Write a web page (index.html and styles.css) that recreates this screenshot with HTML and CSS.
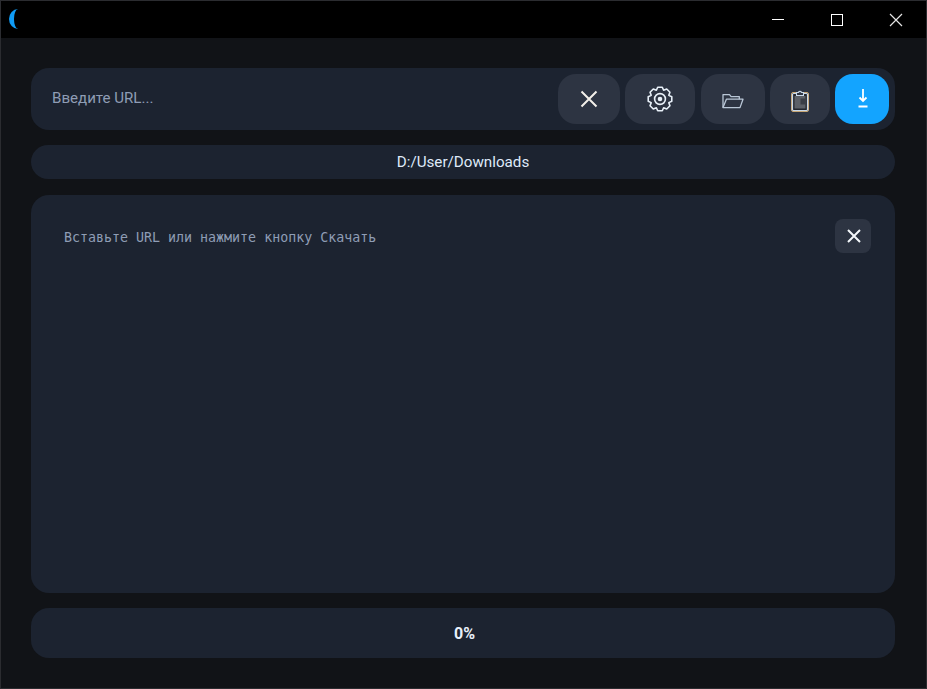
FILE: index.html
```html
<!DOCTYPE html>
<html lang="en">
<head>
  <meta charset="UTF-8">
  <title>Downloader</title>
  <link rel="stylesheet" href="styles.css">
</head>
<body>

<div class="window">
  <div class="titlebar">
    <div class="logo"></div>
    <div class="win-controls">
      <div class="win-btn"><div class="win-min"></div></div>
      <div class="win-btn"><div class="win-max"></div></div>
      <div class="win-btn">
        <svg width="14" height="14" viewBox="0 0 14 14"><path d="M1 1L13 13M13 1L1 13" stroke="#e4e4e4" stroke-width="1.2" fill="none"/></svg>
      </div>
    </div>
  </div>

  <div class="content">
    <div class="url-bar">
      <div class="url-input">Введите URL...</div>
      <div class="btn btn-clear">
        <svg width="20" height="20" viewBox="0 0 20 20"><path d="M2.500 2.500L17.500 17.500M17.500 2.500L2.500 17.500" stroke="#f3efe9" stroke-width="2" fill="none"/></svg>
      </div>
      <div class="btn btn-settings">
        <svg width="26" height="26" viewBox="0 0 26 26" fill="none" stroke="#e8f0f8" stroke-width="1.6" stroke-linejoin="round">
          <polygon points="10.71,1.22 15.29,1.22 16.64,4.22 19.71,3.05 22.95,6.29 21.78,9.36 24.78,10.71 24.78,15.29 21.78,16.64 22.95,19.71 19.71,22.95 16.64,21.78 15.29,24.78 10.71,24.78 9.36,21.78 6.29,22.95 3.05,19.71 4.22,16.64 1.22,15.29 1.22,10.71 4.22,9.36 3.05,6.29 6.29,3.05 9.36,4.22"/>
          <circle cx="13" cy="13" r="5.4"/>
          <circle cx="13" cy="13" r="2.3" fill="#e8f0f8" stroke="none"/>
        </svg>
      </div>
      <div class="btn btn-folder">
        <svg width="22" height="16" viewBox="0 0 22 16" fill="none" stroke="#b9c6d6" stroke-width="1.3" stroke-linejoin="round">
          <path d="M1 14.600V1.600h6.500l1.600 2h8.200v2.600"/>
          <path d="M1 14.600L4.400 6.200H21l-3 8.400z"/>
        </svg>
      </div>
      <div class="btn btn-paste">
        <svg width="18" height="23" viewBox="0 0 18 23">
          <rect x="0.500" y="3.500" width="17" height="19" rx="1.500" fill="none" stroke="#c9a876" stroke-width="1"/>
          <rect x="1.500" y="4.500" width="15" height="17" rx="1" fill="#22262e" stroke="#c9d8e8" stroke-width="1.200"/>
          <path d="M3.500 7h11v12.500h-11z" fill="#5c6067"/>
          <path d="M9.500 9.500h5v6h-5z" fill="#3a3e46"/>
          <path d="M5.500 6.500V3.500H7.400a1.700 1.700 0 0 1 3.200 0H12.500V6.500z" fill="#2d3442" stroke="#c9d8e8" stroke-width="1.100"/>
        </svg>
      </div>
      <div class="btn btn-download">
        <svg width="10" height="19" viewBox="0 0 10 19" fill="none" stroke="#fff" stroke-width="1.800">
          <path d="M5 0V11.800M1.500 8.500L5 12L8.500 8.500M0.500 17.500H9.500"/>
        </svg>
      </div>
    </div>

    <div class="path-bar">D:/User/Downloads</div>

    <div class="log-panel">
      <div class="log-text">Вставьте URL или нажмите кнопку Скачать</div>
      <div class="log-close">
        <svg width="14" height="14" viewBox="0 0 14 14"><path d="M1 1L13 13M13 1L1 13" stroke="#f4f7fb" stroke-width="2" fill="none"/></svg>
      </div>
    </div>

    <div class="progress-bar">0%</div>
  </div>
</div>

</body>
</html>
```

FILE: styles.css
```css
* {
  box-sizing: border-box;
}

body {
  margin: 0;
  height: 100vh;
  font-family: 'Roboto', sans-serif;
  background: #111317;
}

.window {
  height: 100vh;
  display: flex;
  flex-direction: column;
  border: 1px solid #2b2c30;
}

.titlebar {
  height: 37px;
  flex-shrink: 0;
  background: #000;
  display: flex;
  justify-content: space-between;
}

.logo {
  width: 9px;
  height: 20px;
  margin: 8px 0 0 8px;
  border-left: 5px solid #0f9bf5;
  border-radius: 9px 0 0 9px / 10px 0 0 10px;
}

.win-controls {
  display: flex;
  padding-right: 1px;
}

.win-btn {
  width: 59px;
  height: 37px;
  display: flex;
  align-items: center;
  justify-content: center;
}

.win-min {
  width: 12px;
  height: 1px;
  background: #fff;
}

.win-max {
  width: 12px;
  height: 12px;
  border: 1px solid #fff;
}

.content {
  flex: 1;
  display: flex;
  flex-direction: column;
  padding: 30px 31px 30px 30px;
}

.url-bar {
  height: 62px;
  flex-shrink: 0;
  background: #1c2330;
  border-radius: 18px;
  display: flex;
  align-items: center;
  padding: 0 6px 0 21px;
  gap: 5px;
  margin-bottom: 15px;
}

.url-input {
  flex: 1;
  font-size: 15.1px;
  line-height: 18px;
  padding-bottom: 2px;
  color: #8f9db5;
}

.btn {
  height: 50px;
  background: #2d3442;
  border-radius: 18px;
  display: flex;
  align-items: center;
  justify-content: center;
}

.btn-clear { width: 62px; }
.btn-settings { width: 70px; padding-bottom: 1px; }
.btn-folder { width: 64px; margin-left: 1px; padding-top: 3px; }
.btn-paste { width: 60px; padding-top: 3px; }
.btn-download { width: 54px; background: #13a4ff; padding-bottom: 2px; padding-left: 1px; }

.path-bar {
  height: 34px;
  flex-shrink: 0;
  background: #1c2330;
  border-radius: 17px;
  display: flex;
  align-items: center;
  justify-content: center;
  font-size: 15.2px;
  color: #dfeafa;
  margin-bottom: 16px;
}

.log-panel {
  flex: 1;
  background: #1c2330;
  border-radius: 18px;
  display: flex;
  justify-content: space-between;
  align-items: flex-start;
  padding: 24px 24px 0 33px;
  margin-bottom: 15px;
}

.log-text {
  font-family: 'DejaVu Sans Mono', monospace;
  font-size: 13.3px;
  line-height: 38px;
  color: #8f9db5;
}

.log-close {
  width: 36px;
  height: 34px;
  background: #2d3442;
  border-radius: 8px;
  display: flex;
  align-items: center;
  justify-content: center;
  padding-left: 1px;
}

.progress-bar {
  height: 50px;
  flex-shrink: 0;
  background: #1c2330;
  border-radius: 18px;
  display: flex;
  align-items: center;
  justify-content: center;
  padding-left: 3px;
  font-size: 16px;
  font-weight: bold;
  color: #e8f0fa;
}
```
